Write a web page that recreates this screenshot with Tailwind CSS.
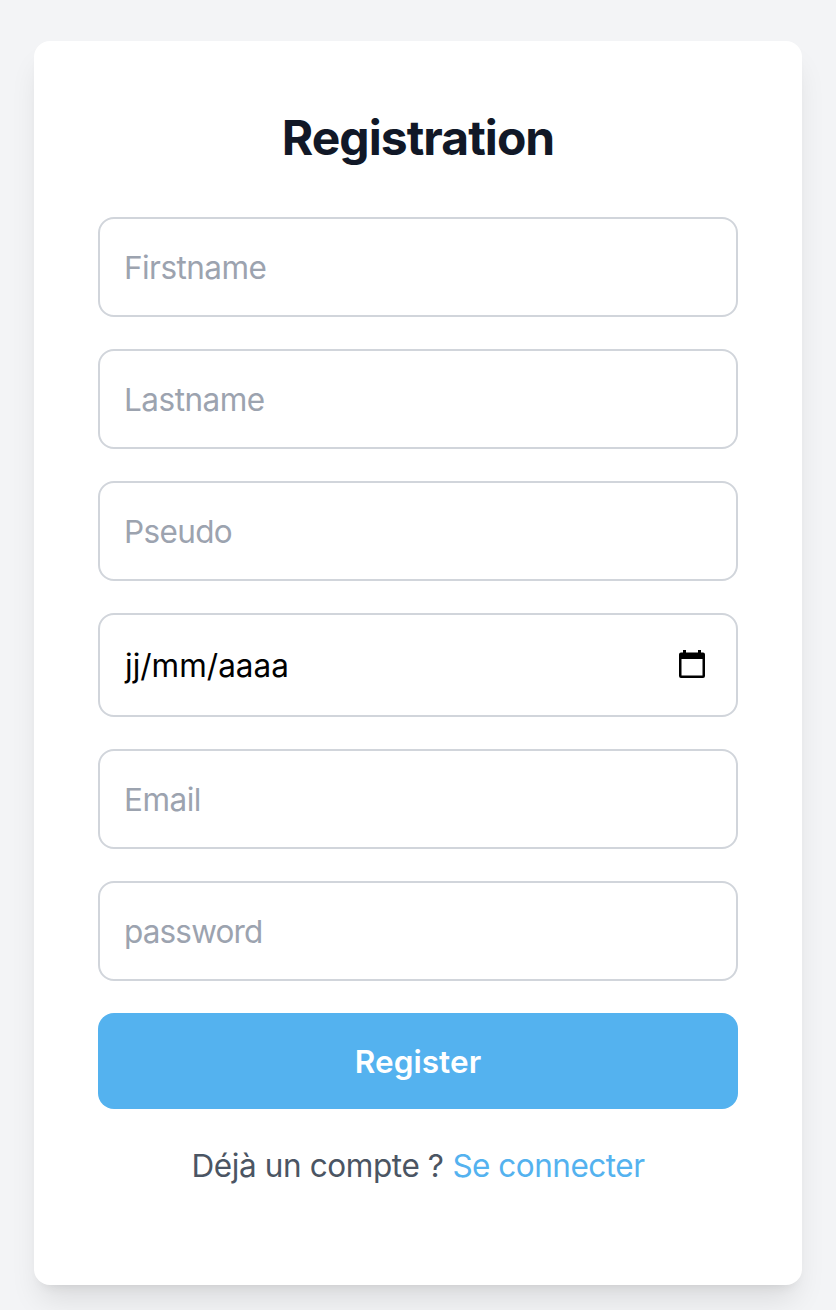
<!DOCTYPE html>
<html lang="fr">
<head>
<meta charset="utf-8">
<title>Registration</title>
<script src="https://cdn.jsdelivr.net/npm/@tailwindcss/browser@4"></script>
</head>
<body class="bg-[#f3f4f6] h-[1310px] overflow-hidden px-[34px] pt-[41px] font-['Inter',sans-serif] text-[31.5px]">
<main class="h-[1244px] rounded-2xl bg-white px-16 pt-16 shadow-[0_20px_30px_-6px_rgba(0,0,0,0.1),0_8px_12px_-8px_rgba(0,0,0,0.1)]">
  <h1 class="mb-[47px] pt-px text-center text-[48px] leading-[64px] font-bold tracking-[-0.95px] text-[#111827]">Registration</h1>
  <form class="flex flex-col gap-8">
    <div class="flex h-[100px] items-center rounded-2xl border-2 border-[#d1d5db] px-6 pt-0.5 text-[#9ca3af]"><span class="tracking-[-0.55px]">Firstname</span></div>
    <div class="flex h-[100px] items-center rounded-2xl border-2 border-[#d1d5db] px-6 pt-0.5 text-[#9ca3af]"><span class="tracking-[-0.5px]">Lastname</span></div>
    <div class="flex h-[100px] items-center rounded-2xl border-2 border-[#d1d5db] px-6 pt-0.5 text-[#9ca3af]"><span class="tracking-[-0.65px]">Pseudo</span></div>
    <div class="flex h-[104px] items-center justify-between rounded-2xl border-2 border-[#d1d5db] pr-[31px] pl-[25px] text-black"><span class="pt-0.5">jj/mm/aaaa</span>
      <svg class="mb-0.5 h-7 w-[26px]" viewBox="0 0 26 28"><path fill="currentColor" fill-rule="evenodd" d="M4 0h3v2.5h12V0h3v2.5h2a2 2 0 0 1 2 2v21.500a2 2 0 0 1-2 2H2a2 2 0 0 1-2-2V4.500a2 2 0 0 1 2-2h2zM2.500 9v16.500h21V9z"/></svg></div>
    <div class="flex h-[100px] items-center rounded-2xl border-2 border-[#d1d5db] px-6 pt-0.5 text-[#9ca3af]"><span class="tracking-[-0.5px]">Email</span></div>
    <div class="flex h-[100px] items-center rounded-2xl border-2 border-[#d1d5db] px-6 pt-0.5 text-[#9ca3af]"><span class="tracking-[-0.85px]">password</span></div>
    <button type="button" class="h-24 rounded-2xl bg-[#54b2ef] pt-0.5 text-center font-semibold text-white"><span class="tracking-[0.05px]">Register</span></button>
  </form>
  <p class="mt-[33px] text-center leading-[48px] whitespace-nowrap text-[#4b5563]"><span class="tracking-[-0.4px]">Déjà un compte ?</span> <a class="tracking-[-0.5px] text-[#54b2ef]">Se connecter</a></p>
</main>
</body>
</html>
